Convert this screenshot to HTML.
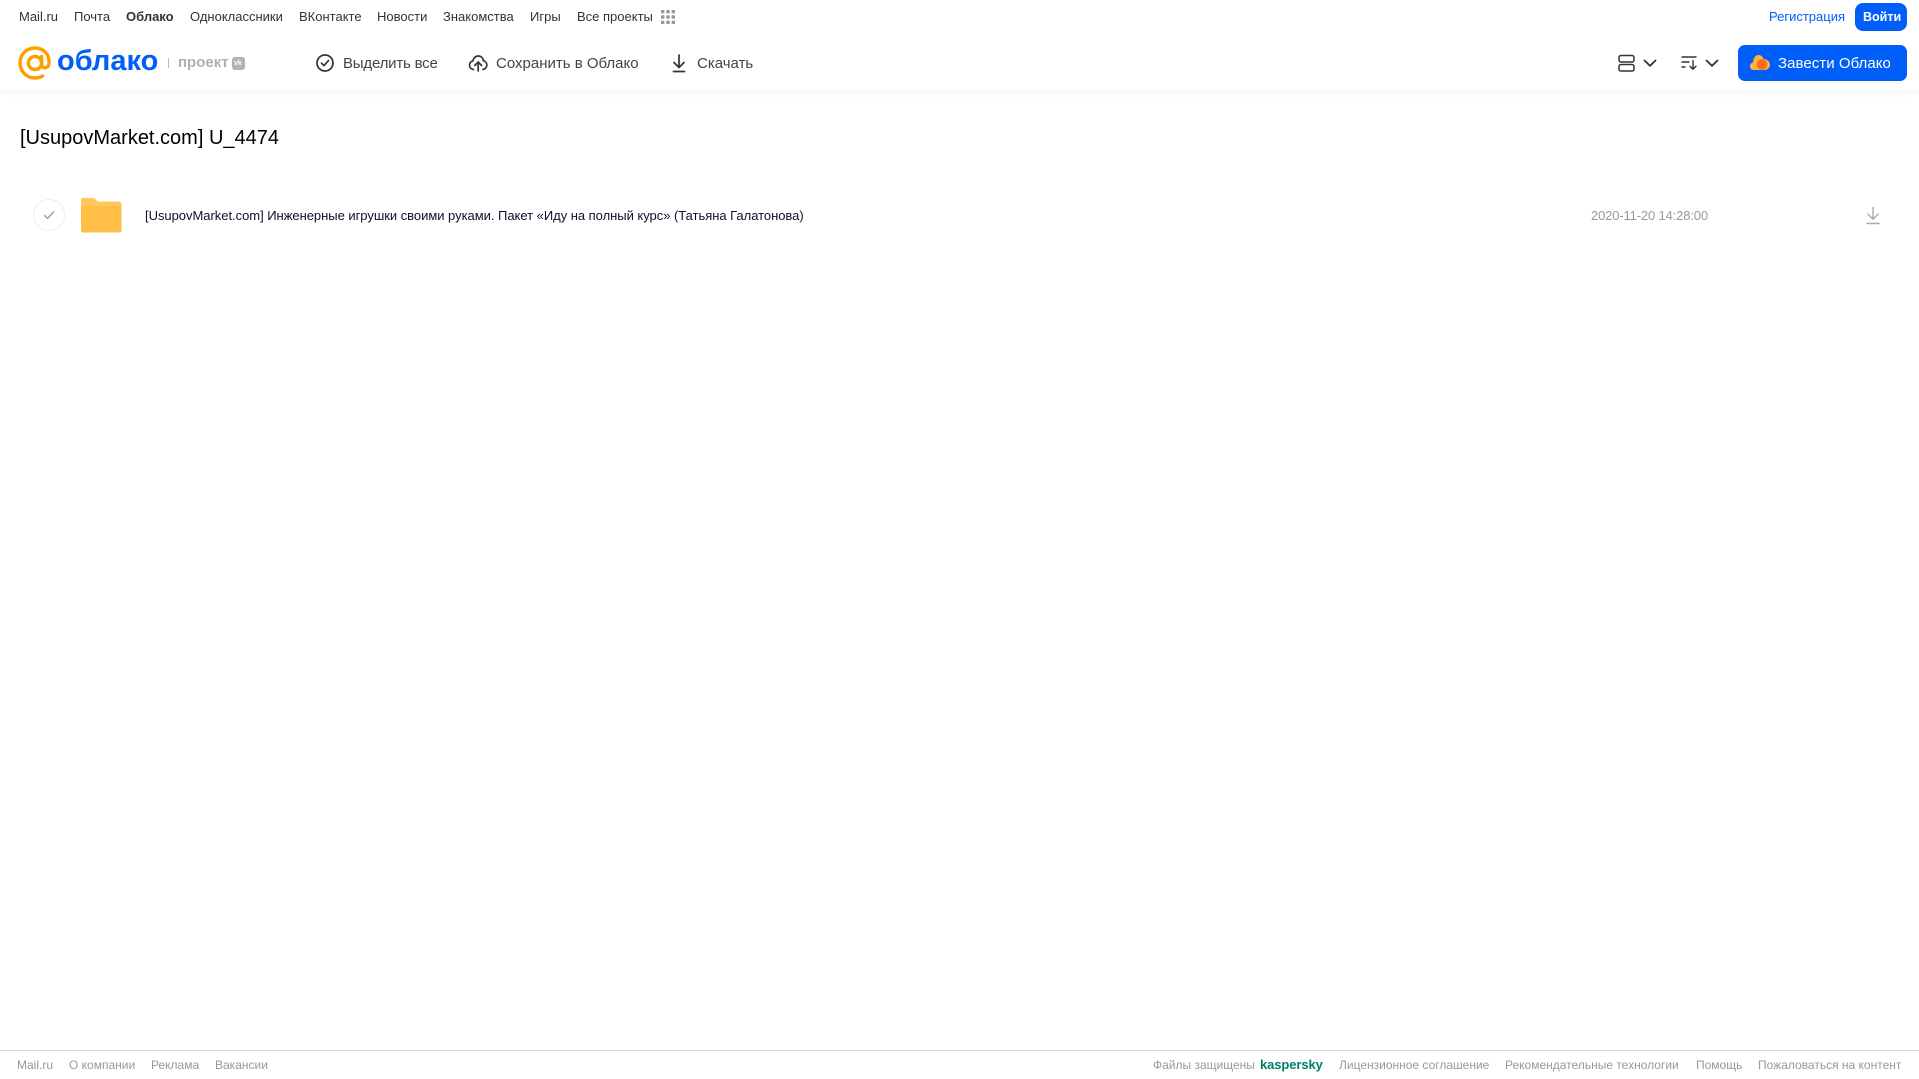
<!DOCTYPE html>
<html lang="ru">
<head>
<meta charset="utf-8">
<title>Облако</title>
<style>
html,body{margin:0;padding:0;background:#fff}
body{width:1919px;height:1079px;position:relative;overflow:hidden;font-family:"Liberation Sans","Noto Sans CJK SC",sans-serif;color:#333}
.t{position:absolute;white-space:nowrap;line-height:1}
.n{font-size:13px;top:10px;color:#333}
.b{font-size:15px;top:56px;color:#444}
.f{font-size:12px;top:1059px;color:#999}
svg{position:absolute;display:block}
#hdr{position:absolute;left:0;top:0;width:1919px;height:90px;background:#fff;box-shadow:0 1px 8px rgba(0,0,0,.07)}
</style>
</head>
<body>
<div id="hdr"></div>

<span class="t n" style="left:19px">Mail.ru</span>
<span class="t n" style="left:74px">Почта</span>
<span class="t n" style="left:126px;font-weight:bold">Облако</span>
<span class="t n" style="left:190px">Одноклассники</span>
<span class="t n" style="left:299px">ВКонтакте</span>
<span class="t n" style="left:377px">Новости</span>
<span class="t n" style="left:443px">Знакомства</span>
<span class="t n" style="left:530px">Игры</span>
<span class="t n" style="left:577px">Все проекты</span>
<svg style="left:660px;top:9px" width="16" height="16" viewBox="0 0 16 16" fill="#999">
<rect x="1" y="1" width="3.4" height="3.4" rx=".8"/><rect x="6.3" y="1" width="3.4" height="3.4" rx=".8"/><rect x="11.6" y="1" width="3.4" height="3.4" rx=".8"/>
<rect x="1" y="6.3" width="3.4" height="3.4" rx=".8"/><rect x="6.3" y="6.3" width="3.4" height="3.4" rx=".8"/><rect x="11.6" y="6.3" width="3.4" height="3.4" rx=".8"/>
<rect x="1" y="11.6" width="3.4" height="3.4" rx=".8"/><rect x="6.3" y="11.6" width="3.4" height="3.4" rx=".8"/><rect x="11.6" y="11.6" width="3.4" height="3.4" rx=".8"/>
</svg>

<span class="t n" style="left:1769px;color:#005ff9">Регистрация</span>
<div style="position:absolute;left:1855px;top:3px;width:52px;height:28px;border-radius:8px;background:#005ff9"></div>
<span class="t n" style="left:1863px;top:11px;color:#fff;font-weight:bold;font-size:12.5px">Войти</span>

<!-- logo -->
<svg style="left:18px;top:46px" width="36" height="34" viewBox="0 0 36 34" fill="none">
<circle cx="17" cy="17" r="6.6" stroke="#ff9e00" stroke-width="3.4"/>
<path d="M23.6 10.5V18.5C23.6 23 30.6 23 31 17.5C31.8 7.5 24.5 2 17 2C8.5 2 2 8.6 2 17C2 25.4 8.6 32 17 32C20 32 22.5 31.2 24.6 30" stroke="#ff9e00" stroke-width="3.4" stroke-linecap="round"/>
</svg>
<span class="t" style="left:57px;top:47px;font-size:29px;color:#005ff9;font-weight:bold">облако</span>
<div style="position:absolute;left:168px;top:58px;width:1px;height:10px;background:#bbb"></div>
<span class="t" style="left:178px;top:55px;font-size:15px;color:#b0b0b0;font-weight:bold">проект</span>
<div style="position:absolute;left:232px;top:57px;width:13px;height:13px;border-radius:3px;background:#b3b3b3"></div>
<span class="t" style="left:234px;top:60px;font-size:7px;font-weight:bold;color:#fff">vk</span>

<!-- toolbar -->
<svg style="left:315px;top:53px" width="20" height="20" viewBox="0 0 20 20" fill="none" stroke="#333" stroke-width="1.7">
<circle cx="10" cy="10" r="8"/><path d="M6.5 10.2L9 12.6L13.5 7.6" stroke-linecap="round" stroke-linejoin="round"/>
</svg>
<span class="t b" style="left:343px;letter-spacing:-.2px">Выделить все</span>

<svg style="left:468px;top:53px" width="20" height="20" viewBox="0 0 20 20" fill="none" stroke="#333" stroke-width="1.7" stroke-linecap="round" stroke-linejoin="round">
<path d="M5.5 16.5C3 16 1.5 14.2 1.5 12C1.5 9.9 3 8.4 4.8 8C5.4 5.2 7.5 3 10.3 3C13 3 15 5 15.5 7.8C17.4 8.2 18.8 9.8 18.8 12C18.8 14.2 17.2 16 15 16.5"/>
<path d="M10.2 18V9.5M6.8 12.5L10.2 9L13.6 12.5"/>
</svg>
<span class="t b" style="left:496px">Сохранить в Облако</span>

<svg style="left:669px;top:53px" width="20" height="20" viewBox="0 0 20 20" fill="none" stroke="#333" stroke-width="1.7" stroke-linecap="round" stroke-linejoin="round">
<path d="M10 2V14M5 9.5L10 14.5L15 9.5"/><path d="M4.5 18.5H15.5"/>
</svg>
<span class="t b" style="left:697px">Скачать</span>

<!-- right tools -->
<svg style="left:1618px;top:54px" width="18" height="19" viewBox="0 0 18 19" fill="none" stroke="#333" stroke-width="1.5">
<rect x="1" y="1.5" width="15" height="6.5" rx="2"/><rect x="1" y="10.5" width="15" height="6.5" rx="2"/>
</svg>
<svg style="left:1643px;top:59px" width="14" height="9" viewBox="0 0 14 9" fill="none" stroke="#333" stroke-width="1.8" stroke-linecap="round" stroke-linejoin="round"><path d="M1.5 1.5L7 6.8L12.5 1.5"/></svg>
<svg style="left:1681px;top:55px" width="18" height="16" viewBox="0 0 18 16" fill="none" stroke="#333" stroke-width="1.4" stroke-linecap="round" stroke-linejoin="round">
<path d="M1 2H15M1 7H8M1 12H4"/><path d="M12 5.5V14M9 11.2L12 14.2L15 11.2"/>
</svg>
<svg style="left:1705px;top:59px" width="14" height="9" viewBox="0 0 14 9" fill="none" stroke="#333" stroke-width="1.8" stroke-linecap="round" stroke-linejoin="round"><path d="M1.5 1.5L7 6.8L12.5 1.5"/></svg>

<div style="position:absolute;left:1738px;top:45px;width:169px;height:36px;border-radius:7px;background:#005ff9"></div>
<svg style="left:1750px;top:54px" width="20" height="17" viewBox="0 0 20 17">
<path d="M4 16C1.5 16 0 14.3 0 12.2C0 10.2 1.4 8.8 3 8.4C3.4 4 5.6 1 8.5 1C11 1 12.8 2.6 13.5 5C17 5 20 7.5 20 10.8C20 14 17.4 16 14.5 16Z" fill="#ffb13d"/>
<circle cx="12" cy="10.5" r="5.3" fill="#ff6a1f"/>
</svg>
<span class="t" style="left:1778px;top:56px;font-size:15px;color:#fff;letter-spacing:.05px">Завести Облако</span>

<!-- content -->
<span class="t" style="left:20px;top:128px;font-size:20px;color:#000">[UsupovMarket.com] U_4474</span>

<svg style="left:32px;top:198px" width="34" height="34" viewBox="0 0 34 34" fill="none">
<circle cx="17" cy="17" r="15.5" stroke="#eeeeee"/>
<path d="M12.5 17.5L15.5 20.5L21.5 14" stroke="#999" stroke-width="1.3" stroke-linecap="round" stroke-linejoin="round"/>
</svg>

<svg style="left:81px;top:198px" width="41" height="35" viewBox="0 0 41 35">
<path d="M2.5 0H11.5C13 0 14 .7 15 1.8L16.5 3.5H38C39.5 3.5 40.5 4.5 40.5 6V32C40.5 33.5 39.5 34.5 38 34.5H2.5C1 34.5 0 33.5 0 32V2.5C0 1 1 0 2.5 0Z" fill="#ffc85a"/>
<path d="M0 8H40.5V32C40.5 33.5 39.5 34.5 38 34.5H2.5C1 34.5 0 33.5 0 32Z" fill="#ffbe45"/>
</svg>

<span class="t" style="left:145px;top:209px;font-size:13px;color:#1a0a2a;letter-spacing:-.03px">[UsupovMarket.com] Инженерные игрушки своими руками. Пакет «Иду на полный курс» (Татьяна Галатонова)</span>
<span class="t" style="left:1591px;top:209px;font-size:13px;color:#999;letter-spacing:-.15px">2020-11-20 14:28:00</span>

<svg style="left:1864px;top:206px" width="18" height="20" viewBox="0 0 18 20" fill="none" stroke="#aaa" stroke-width="1.4" stroke-linecap="round" stroke-linejoin="round">
<path d="M9 1.5V13M3.8 8L9 13.2L14.2 8"/><path d="M3 17.5H15" stroke-width="1.6"/>
</svg>

<!-- footer -->
<div style="position:absolute;left:0;top:1050px;width:1919px;height:1px;background:#d8d8d8"></div>
<span class="t f" style="left:17px">Mail.ru</span>
<span class="t f" style="left:69px">О компании</span>
<span class="t f" style="left:151px">Реклама</span>
<span class="t f" style="left:215px">Вакансии</span>

<span class="t f" style="left:1153px">Файлы защищены</span>
<span class="t" style="left:1260px;top:1058px;font-size:13px;font-weight:bold;color:#00806a;letter-spacing:-.1px">kaspersky</span>
<span class="t f" style="left:1339px">Лицензионное соглашение</span>
<span class="t f" style="left:1505px">Рекомендательные технологии</span>
<span class="t f" style="left:1696px">Помощь</span>
<span class="t f" style="left:1758px">Пожаловаться на контент</span>
</body>
</html>
